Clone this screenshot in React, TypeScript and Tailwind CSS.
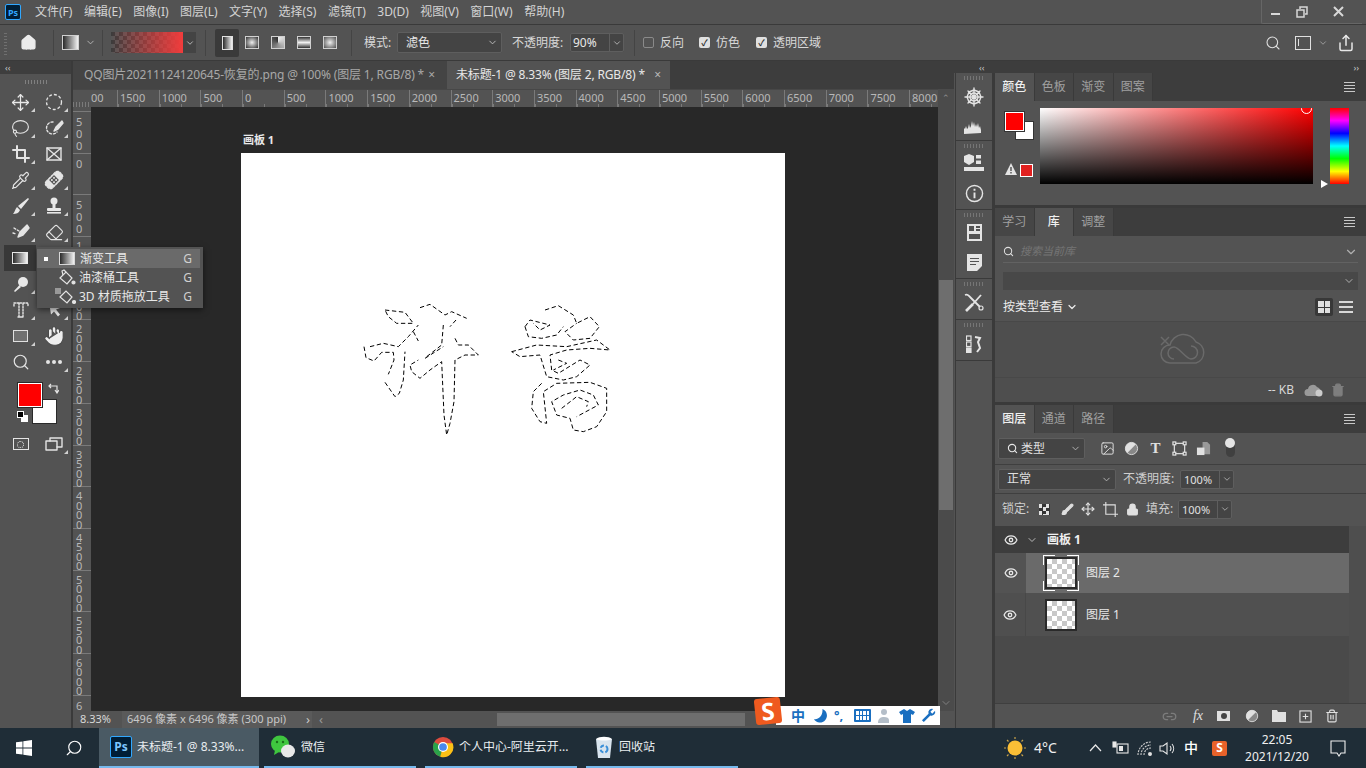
import { ChevronDown, Lasso, Pipette, Brush, Eraser, Search, Hand, Move, Home, Share, Image as ImageIcon, Eye, Trash2, Link2, Lock } from "lucide-react";
import type { ReactNode } from "react";

const MENUS = ["文件(F)", "编辑(E)", "图像(I)", "图层(L)", "文字(Y)", "选择(S)", "滤镜(T)", "3D(D)", "视图(V)", "窗口(W)", "帮助(H)"];
const H_RULER = ["1500", "1000", "500", "0", "500", "1000", "1500", "2000", "2500", "3000", "3500", "4000", "4500", "5000", "5500", "6000", "6500", "7000", "7500", "8000"];
const V_RULER = ["500", "0", "500", "1000", "1500", "2000", "2500", "3000", "3500", "4000", "4500", "5000", "5500", "6000", "6"];

const CHECKER = "bg-[conic-gradient(#c8c8c8_25%,#ffffff_0_50%,#c8c8c8_0_75%,#ffffff_0)] bg-[length:10px_10px]";
const GRAD_ICON = "bg-[linear-gradient(90deg,#2a2a2a,#f2f2f2)]";

function Svg({ children, size = 20, fill = "none" }: { children: ReactNode; size?: number; fill?: string }) {
  return (
    <svg width={size} height={size} viewBox="0 0 20 20" fill={fill} stroke={fill === "none" ? "#e4e4e4" : "none"} strokeWidth="1.4" strokeLinecap="round" strokeLinejoin="round">
      {children}
    </svg>
  );
}

function Tool({ children, more = true }: { children: ReactNode; more?: boolean }) {
  return (
    <div className="relative flex h-[26px] items-center justify-center">
      {children}
      {more && <span className="absolute bottom-[3px] right-[3px] h-0 w-0 border-b-[4px] border-l-[4px] border-b-[#d0d0d0] border-l-transparent" />}
    </div>
  );
}

function LeftToolbar() {
  return (
    <div className="flex w-[73px] shrink-0 flex-col border-r-2 border-[#3a3a3a]">
      <div className="flex h-[13px] items-center bg-[#3e3e3e] pl-[5px] text-[9px] leading-none text-[#c8c8c8]">‹‹</div>
      <div className="flex h-[15px] items-center justify-center">
        <div className="h-[4px] w-[22px] bg-[repeating-linear-gradient(90deg,#808080_0_1px,transparent_1px_3px)]" />
      </div>
      <div className="grid grid-cols-2 pl-[4px]">
        <Tool><Move size={19} color="#e8e8e8" strokeWidth={1.6} /></Tool>
        <Tool><svg width="20" height="20" viewBox="0 0 20 20" fill="none" stroke="#e4e4e4" strokeWidth="1.3" strokeDasharray="3 2"><circle cx="10" cy="10" r="7.5" /></svg></Tool>
        <Tool><Lasso size={19} color="#e4e4e4" strokeWidth={1.4} /></Tool>
        <Tool><Svg><path strokeDasharray="2 2" d="M9 4a6 6 0 1 0 4 10" /><path fill="#e4e4e4" d="M18 3l-6 6-2 4 4-2 5-6z" /></Svg></Tool>
        <Tool><Svg><path strokeWidth="2" d="M6 2v12h12M2 6h12v12" /></Svg></Tool>
        <Tool more={false}><Svg><rect x="3" y="4" width="14" height="12" /><path d="M3 4l14 12M17 4L3 16" /></Svg></Tool>
        <Tool><Pipette size={19} color="#e4e4e4" strokeWidth={1.5} /></Tool>
        <Tool><Svg><g transform="rotate(-45 10 10)"><rect x="0.5" y="5.5" width="19" height="9" rx="3" fill="#e4e4e4" strokeDasharray="2 1.5" /><rect x="6.5" y="6.5" width="7" height="7" fill="#555" stroke="none" /><circle cx="8.5" cy="8.5" r="1" fill="#e4e4e4" stroke="none" /><circle cx="11.5" cy="11.5" r="1" fill="#e4e4e4" stroke="none" /><circle cx="8.5" cy="11.5" r="1" fill="#e4e4e4" stroke="none" /><circle cx="11.5" cy="8.5" r="1" fill="#e4e4e4" stroke="none" /></g></Svg></Tool>
        <Tool><Svg fill="#e8e8e8"><path d="M17 2l1 1-8 10-3-3zM6 11l3 3c-1 3-4 4-7 4 2-2 2-5 4-7z" /></Svg></Tool>
        <Tool><Svg fill="#e8e8e8"><circle cx="10" cy="5" r="3.5" /><rect x="8.5" y="7" width="3" height="6" /><rect x="3" y="12" width="14" height="3" rx="1" /><rect x="3" y="16" width="14" height="1.6" /></Svg></Tool>
        <Tool><Svg><path fill="#e4e4e4" d="M16 3l-7 7-2 5 5-2 6-7z" /><path strokeDasharray="2 2" d="M3 6l5 3M2 11l3 1" /></Svg></Tool>
        <Tool><Eraser size={19} color="#e4e4e4" strokeWidth={1.4} /></Tool>
        <div className="relative flex h-[26px] w-[32px] items-center justify-center bg-[#383838]">
          <div className={`h-[12px] w-[16px] border border-[#e8e8e8] ${GRAD_ICON}`} />
        </div>
        <div />
        <Tool><Svg fill="#e8e8e8"><circle cx="12" cy="8" r="5" /><path d="M8.5 11L3 17l1 1 6-5z" /></Svg></Tool>
        <div />
        <Tool><Svg><path strokeDasharray="1.5 1.5" d="M3 6V3h14v3M8 3v14h4V3M7 17h6" /></Svg></Tool>
        <Tool><Svg fill="#e8e8e8"><path d="M5 2l11 6-4 1.5 4 5-2 2-4-5-3 3z" /></Svg></Tool>
        <Tool><div className="h-[12px] w-[15px] border border-[#e0e0e0] bg-[#707070]" /></Tool>
        <Tool more={false}><Hand size={22} color="#4a4a4a" fill="#eeeeee" strokeWidth={1.1} /></Tool>
        <Tool more={false}><Search size={18} color="#e4e4e4" strokeWidth={1.6} /></Tool>
        <Tool><div className="flex gap-[2px]"><span className="h-[4px] w-[4px] rounded-full bg-[#e4e4e4]" /><span className="h-[4px] w-[4px] rounded-full bg-[#e4e4e4]" /><span className="h-[4px] w-[4px] rounded-full bg-[#e4e4e4]" /></div></Tool>
      </div>
      <div className="relative mt-[8px] h-[48px]">
        <div className="absolute left-[32px] top-[16px] h-[25px] w-[25px] border border-[#2a2a2a] bg-white" />
        <div className="absolute left-[18px] top-0 h-[24px] w-[24px] border border-white bg-[#ff0000] outline outline-1 outline-[#2a2a2a]" />
        <svg className="absolute left-[48px] top-[0px]" width="11" height="11" viewBox="0 0 11 11" fill="none" stroke="#e4e4e4" strokeWidth="1.2"><path d="M3 1L1 3l2 2M1 3h8v6M7 7l2 3 2-3" /></svg>
        <div className="absolute left-[21px] top-[32px] h-[7px] w-[7px] bg-white" />
        <div className="absolute left-[17px] top-[28px] h-[7px] w-[7px] border border-white bg-black" />
      </div>
      <div className="grid grid-cols-2 pl-[4px]">
        <Tool more={false}><div className="flex h-[12px] w-[16px] items-center justify-center border border-[#e4e4e4]"><span className="h-[7px] w-[7px] rounded-full border border-dotted border-[#e4e4e4]" /></div></Tool>
        <Tool><Svg><rect x="2" y="7" width="11" height="9" /><path d="M6 7V4h12v9h-5" /></Svg></Tool>
      </div>
    </div>
  );
}

function FlyoutMenu() {
  return (
    <div className="absolute left-[37px] top-[186px] z-20 w-[166px] bg-[#535353] py-[2px] text-[12px] text-[#e8e8e8] shadow-[0_2px_6px_rgba(0,0,0,0.5)]">
      <div className="mr-[3px] flex h-[19px] items-center bg-[#6a6a6a] pr-[8px]">
        <span className="ml-[7px] h-[4px] w-[4px] bg-white" />
        <div className={`ml-[11px] h-[13px] w-[16px] border border-[#d8d8d8] ${GRAD_ICON}`} />
        <span className="ml-[5px] flex-1 leading-none">渐变工具</span>
        <span className="text-[#d0d0d0]">G</span>
      </div>
      <div className="mr-[3px] flex h-[19px] items-center pr-[8px]">
        <svg className="ml-[21px]" width="18" height="17" viewBox="0 0 18 17" fill="none" stroke="#e4e4e4" strokeWidth="1.2"><path d="M2 9l6-6 6 6-5 6z" /><path d="M5 6L4 2l2-1 2 2" /><circle cx="15.5" cy="13.5" r="1.5" fill="#e4e4e4" /></svg>
        <span className="ml-[3px] flex-1 leading-none">油漆桶工具</span>
        <span className="text-[#d0d0d0]">G</span>
      </div>
      <div className="mr-[3px] flex h-[19px] items-center pr-[8px]">
        <svg className="ml-[18px]" width="21" height="17" viewBox="0 0 21 17" fill="none" stroke="#e4e4e4" strokeWidth="1.2"><rect x="0" y="0" width="6" height="6" fill="#999" stroke="none" /><path d="M5 9l6-6 6 6-5 6z" /><circle cx="19" cy="14" r="1.5" fill="#e4e4e4" /></svg>
        <span className="ml-[3px] flex-1 leading-none">3D 材质拖放工具</span>
        <span className="text-[#d0d0d0]">G</span>
      </div>
    </div>
  );
}

function Selection() {
  return (
    <svg className="absolute left-[109px] top-[142px]" width="270" height="145" viewBox="0 0 810 435" fill="none" stroke="#000" strokeWidth="3" strokeDasharray="13 8">
      <path d="M105 45L165 52L190 85L140 85L115 65Z" />
      <path d="M42 155L48 188L72 198L95 172L130 172L132 195L115 238" />
      <path d="M60 155L100 145L145 155L175 125L205 90" />
      <path d="M105 262L135 305L148 295L160 255L165 170" />
      <path d="M190 110L205 138" />
      <path d="M210 38L240 28L285 60L305 50L350 70" />
      <path d="M280 90L275 150M318 75L300 95" />
      <path d="M230 185L275 150M225 190L280 155" />
      <path d="M315 130L325 150L355 150L385 180L345 180L315 195L312 320L300 385L290 420L282 360L275 200L240 225L210 250L185 230L180 210L205 195" />
      <path d="M585 45L625 32L670 60L680 85L720 65L748 95L720 130L670 135L645 110L680 85" />
      <path d="M525 95L540 75L600 90L570 105L550 85M525 95L535 125L575 130L620 120L640 95" />
      <path d="M485 170L560 150L650 155L740 135L780 165L720 160L650 165L600 180L605 225L625 235L690 195L720 210L680 245L640 255L590 245L570 180L510 185Z" />
      <path d="M625 195L650 205L610 225" />
      <path d="M575 265L550 290L545 340L570 380L590 385L580 290L620 265L720 262L770 280L770 350L740 395L700 410L670 405L660 370L620 360L605 320L640 300L690 285L730 300L745 330L680 365" />
      <path d="M635 340L680 305L715 320L710 335" />
    </svg>
  );
}

function SogouBar() {
  return (
    <div className="absolute bottom-[3px] right-[14px] z-20 flex h-[19px] w-[164px] items-center justify-end gap-[6px] bg-white pr-[4px] text-[#1a6fc0]">
      <div className="absolute -left-[21px] -top-[8px] flex h-[26px] w-[26px] -rotate-6 items-center justify-center rounded-[3px] bg-[#ef5a1f] text-[24px] font-bold leading-none text-white">S</div>
      <span className="text-[14px] font-bold leading-none">中</span>
      <svg className="ml-[2px]" width="15" height="15" viewBox="0 0 16 16" fill="#1a6fc0"><path d="M10 1a7.5 7.5 0 1 1-9 11c5 1 10-4 9-11z" /></svg>
      <span className="w-[13px] text-[13px] font-bold leading-none">°,</span>
      <div className="ml-[1px] grid h-[13px] w-[17px] grid-cols-4 gap-[1px] rounded-[1px] bg-[#1a6fc0] p-[2px]">
        <span className="bg-white" /><span className="bg-white" /><span className="bg-white" /><span className="bg-white" />
        <span className="bg-white" /><span className="bg-white" /><span className="bg-white" /><span className="bg-white" />
      </div>
      <svg width="16" height="16" viewBox="0 0 16 16" fill="#b4bec8"><circle cx="7" cy="4" r="3" /><path d="M1 15c0-5 3-6 6-6s5 1 5 3v3z" /></svg>
      <svg width="16" height="16" viewBox="0 0 16 16" fill="#1a6fc0"><path d="M5 1L0 4l2 3 2-1v9h8V6l2 1 2-3-5-3-3 2z" /></svg>
      <svg width="15" height="15" viewBox="0 0 16 16" fill="#1a6fc0"><path d="M15 3l-3 3-2-2 3-3a4 4 0 0 0-5 5L1 13l2 2 7-7a4 4 0 0 0 5-5z" /></svg>
    </div>
  );
}

function DocArea() {
  return (
    <div className="relative flex w-[881px] shrink-0 flex-col">
      <div className="flex h-[28px] bg-[#3d3d3d] text-[12px] tracking-[-0.15px]">
        <div className="flex w-[374px] items-center justify-between whitespace-nowrap bg-[#444444] pl-[11px] pr-[12px] text-[#a8a8a8]">
          <span>QQ图片20211124120645-恢复的.png @ 100% (图层 1, RGB/8) *</span>
          <span>×</span>
        </div>
        <div className="flex w-[223px] items-center justify-between whitespace-nowrap bg-[#535353] pl-[9px] pr-[9px] text-[#e8e8e8]">
          <span>未标题-1 @ 8.33% (图层 2, RGB/8) *</span>
          <span className="text-[#b8b8b8]">×</span>
        </div>
      </div>
      <div className="flex min-h-0 flex-1">
        <div className="flex min-w-0 flex-1 flex-col">
          <div className="flex h-[18px] overflow-hidden border-t border-[#474747] text-[11px] leading-[16px] text-[#b8b8b8]">
            <div className="h-full w-[18px] shrink-0 bg-[repeating-linear-gradient(90deg,#7a7a7a_0_1px,transparent_1px_3px)] bg-[length:100%_5px] bg-bottom bg-no-repeat" />
            <div className="w-[26px] shrink-0 overflow-hidden text-left">00</div>
            {H_RULER.map((n, i) => (
              <div key={i} className="w-[41.7px] shrink-0 border-l border-[#7a7a7a] bg-[repeating-linear-gradient(90deg,#7a7a7a_0_1px,transparent_1px_20.85px)] bg-[length:100%_3px] bg-bottom bg-no-repeat pl-[2px]">{n}</div>
            ))}
          </div>
          <div className="flex min-h-0 flex-1">
            <div className="w-[18px] shrink-0 overflow-hidden pt-[4px] text-[11px] text-[#b8b8b8]">
              {V_RULER.map((n, i) => (
                <div key={i} className={`h-[41.7px] border-t border-[#7a7a7a] pl-[3px] pt-[4px] ${n.length > 3 ? "leading-[9.5px]" : "leading-[12px]"}`}>
                  <div className="w-[8px] break-all">{n}</div>
                </div>
              ))}
            </div>
            <div className="flex min-w-0 flex-1 flex-col bg-[#282828] pl-[150px] pt-[26px]">
              <div className="mb-[7px] h-[13px] pl-[2px] text-[11px] font-bold leading-[13px] text-[#e8e8e8]">画板 1</div>
              <div className="relative h-[544px] w-[544px] bg-white">
                <Selection />
              </div>
            </div>
          </div>
        </div>
        <div className="flex w-[16px] shrink-0 flex-col bg-[#4b4b4b]">
          <div className="flex h-[18px] items-center justify-center text-[9px] text-[#909090]">⌃</div>
          <div className="mx-[1px] mt-[173px] h-[230px] bg-[#6e6e6e]" />
          <div className="flex-1" />
          <div className="flex h-[16px] items-center justify-center"><ChevronDown size={12} color="#808080" /></div>
        </div>
      </div>
      <div className="relative flex h-[17px] shrink-0 items-center text-[11px] text-[#c8c8c8]">
        <span className="ml-[7px] w-[42px] text-[#d8d8d8]">8.33%</span>
        <div className="flex h-full w-[190px] items-center bg-[#5a5a5a] pl-[5px] pr-[2px]">
          <span className="flex-1">6496 像素 x 6496 像素 (300 ppi)</span>
          <span className="text-[13px] leading-none">›</span>
        </div>
        <span className="ml-[7px] w-[8px] text-[13px] leading-none text-[#999]">‹</span>
        <div className="ml-[170px] h-[13px] w-[248px] bg-[#6e6e6e]" />
        <SogouBar />
      </div>
    </div>
  );
}

function DockGroup({ h, children }: { h: string; children: ReactNode }) {
  return (
    <div className={`flex flex-col items-center border-b border-[#3a3a3a] ${h}`}>
      <div className="mt-[3px] h-[4px] w-[20px] bg-[repeating-linear-gradient(90deg,#757575_0_1px,transparent_1px_3px)]" />
      <div className="flex flex-1 flex-col items-center justify-around">{children}</div>
    </div>
  );
}

function IconDock() {
  return (
    <div className="ml-[1px] flex w-[38px] shrink-0 flex-col border-x border-[#3a3a3a]">
      <DockGroup h="h-[68px]">
        <Svg><circle cx="10" cy="10" r="4" /><path d="M10 1v18M1 10h18M4 4l12 12M16 4L4 16M10 3l5 2 2 5-2 5-5 2-5-2-2-5 2-5z" /></Svg>
        <svg width="20" height="14" viewBox="0 0 20 14" fill="#e4e4e4"><path d="M0 14V8l1 1 1-3 1 3 1-1 1-4 1 4 1-2 1-5 1 5 1-4 1 5 1-3 1 3 1-4 1 5 1-2 1 4v3z" /></svg>
      </DockGroup>
      <DockGroup h="h-[69px]">
        <svg width="20" height="19" viewBox="0 0 20 19" fill="#e4e4e4"><path d="M5 0l5 2v6l-5 3-5-3V2z" /><rect x="12" y="1" width="5" height="3.5" /><rect x="12" y="6.5" width="5" height="3.5" /><rect x="0" y="13" width="20" height="4" /></svg>
        <svg width="19" height="19" viewBox="0 0 20 20" fill="none" stroke="#e4e4e4" strokeWidth="1.5"><circle cx="10" cy="10" r="8.5" /><path strokeWidth="2" d="M10 9v6M10 5v2" /></svg>
      </DockGroup>
      <DockGroup h="h-[69px]">
        <svg width="15" height="17" viewBox="0 0 15 17" fill="#e4e4e4"><path d="M0 0h15v17H0zM2 2v5h5V2zM9 2v2h4V2zM9 5v2h4V5zM2 10v5h11v-5z" fillRule="evenodd" /></svg>
        <svg width="15" height="17" viewBox="0 0 15 17" fill="#e4e4e4"><path d="M0 0h15v12l-5 5H0zM3 4v1h9V4zM3 7v1h9V7zM3 10v1h6v-1z" fillRule="evenodd" /></svg>
      </DockGroup>
      <DockGroup h="h-[41px]">
        <svg width="20" height="19" viewBox="0 0 20 19" fill="none" stroke="#e4e4e4" strokeWidth="1.8"><path strokeWidth="2.6" d="M2 18l7-7" /><path d="M9 11l8-9" /><path d="M1 2a3.5 3.5 0 0 1 4 1l2 2 9 9" /><circle cx="17" cy="15" r="2" strokeWidth="1.2" /></svg>
      </DockGroup>
      <DockGroup h="h-[41px]">
        <svg width="16" height="18" viewBox="0 0 16 18" fill="none" stroke="#e4e4e4" strokeWidth="1.2"><rect x="0.5" y="1" width="4.5" height="4.5" /><rect x="0.5" y="7" width="4.5" height="4.5" /><rect x="0.5" y="13" width="4.5" height="4.5" fill="#e4e4e4" /><path strokeWidth="2" d="M9 2l5 1-2 4 2 6-3 4" /></svg>
      </DockGroup>
    </div>
  );
}

function PanelTabs({ tabs, active }: { tabs: string[]; active: number }) {
  return (
    <div className="flex h-[28px] shrink-0 bg-[#3d3d3d] text-[12px]">
      {tabs.map((t, i) => (
        <div key={t} className={`flex w-[39.5px] items-center justify-center border-r border-[#3a3a3a] ${i === active ? "bg-[#535353] font-medium text-[#f0f0f0]" : "bg-[#464646] text-[#a0a0a0]"}`}>{t}</div>
      ))}
      <div className="ml-auto flex w-[22px] flex-col justify-center gap-[2px] pr-[6px]">
        <span className="h-px w-[11px] bg-[#c8c8c8]" /><span className="h-px w-[11px] bg-[#c8c8c8]" /><span className="h-px w-[11px] bg-[#c8c8c8]" /><span className="h-px w-[11px] bg-[#c8c8c8]" />
      </div>
    </div>
  );
}

function ColorPanel() {
  return (
    <div className="h-[135px] shrink-0 border-b-[3px] border-[#3a3a3a]">
      <PanelTabs tabs={["颜色", "色板", "渐变", "图案"]} active={0} />
      <div className="flex pl-[10px] pt-[7px]">
        <div className="relative h-[76px] w-[35px] shrink-0">
          <div className="absolute left-[10px] top-[13px] h-[19px] w-[19px] border border-[#333] bg-white" />
          <div className="absolute left-0 top-[4px] h-[19px] w-[19px] border border-white bg-[#ff0000] outline outline-1 outline-[#333]" />
          <svg className="absolute left-0 top-[55px]" width="12" height="12" viewBox="0 0 12 12"><path d="M6 0l6 12H0z" fill="#e4e4e4" /><path d="M6 4v4M6 9v1.5" stroke="#444" strokeWidth="1.3" /></svg>
          <div className="absolute left-[15px] top-[56px] h-[13px] w-[13px] border border-white bg-[#e1201f]" />
        </div>
        <div className="relative h-[76px] w-[273px] shrink-0 overflow-hidden bg-[linear-gradient(to_bottom,transparent,#000),linear-gradient(to_right,#fff,#f00)]">
          <div className="absolute -top-[5px] right-[1px] h-[11px] w-[11px] rounded-full border border-white" />
        </div>
        <div className="relative ml-[17px] h-[76px] w-[19px] bg-[linear-gradient(to_bottom,#f00,#f0f,#00f,#0ff,#0f0,#ff0,#f00)]">
          <div className="absolute -left-[9px] bottom-[-4px] h-0 w-0 border-y-[4px] border-l-[7px] border-y-transparent border-l-white" />
        </div>
      </div>
    </div>
  );
}

function LibraryPanel() {
  return (
    <div className="flex h-[197px] shrink-0 flex-col border-b-[3px] border-[#3a3a3a]">
      <PanelTabs tabs={["学习", "库", "调整"]} active={1} />
      <div className="mx-[8px] mt-[5px] flex h-[22px] items-center border-b border-[#626262]">
        <Search size={11} color="#e0e0e0" strokeWidth={2.2} />
        <span className="ml-[6px] flex-1 text-[11px] italic text-[#757575]">搜索当前库</span>
        <ChevronDown size={14} color="#b0b0b0" />
      </div>
      <div className="mx-[8px] mt-[9px] flex h-[18px] items-center justify-end bg-[#484848] pr-[3px]">
        <ChevronDown size={12} color="#b0b0b0" />
      </div>
      <div className="flex h-[32px] items-center border-b border-[#484848] pl-[8px] pr-[13px] pt-[3px] text-[12px] text-[#ececec]">
        <span>按类型查看</span>
        <ChevronDown size={12} color="#ececec" className="ml-[3px]" strokeWidth={2.4} />
        <div className="ml-auto flex h-[18px] w-[18px] items-center justify-center rounded-[2px] bg-[#383838]">
          <div className="grid grid-cols-2 gap-[1px]"><span className="h-[5.5px] w-[5.5px] bg-[#e0e0e0]" /><span className="h-[5.5px] w-[5.5px] bg-[#e0e0e0]" /><span className="h-[5.5px] w-[5.5px] bg-[#e0e0e0]" /><span className="h-[5.5px] w-[5.5px] bg-[#e0e0e0]" /></div>
        </div>
        <div className="ml-[6px] flex w-[14px] flex-col gap-[3px]">
          <span className="h-[2px] bg-[#d8d8d8]" /><span className="h-[2px] bg-[#d8d8d8]" /><span className="h-[2px] bg-[#d8d8d8]" />
        </div>
      </div>
      <div className="flex h-[56px] items-center justify-center border-b border-[#484848] bg-[#4e4e4e] pl-[4px]">
        <svg width="46" height="34" viewBox="0 0 46 34" fill="none" stroke="#6a6a6a" strokeWidth="1.5"><path d="M1 4l8 8M9 4l-8 8" /><path d="M10 30a9 9 0 0 1 0-18 14 14 0 0 1 26-3 11 11 0 0 1 0 21z" /><path d="M14 26a6 6 0 0 1 0-12c5 0 12 12 17 12a6 6 0 0 0 0-13" /></svg>
      </div>
      <div className="flex flex-1 items-center justify-end bg-[#4e4e4e] pr-[21px] text-[12px] text-[#d8d8d8]">
        <span>-- KB</span>
        <svg className="ml-[10px]" width="20" height="14" viewBox="0 0 20 14" fill="#9a9a9a"><path d="M4 13a3.5 3.5 0 0 1 0-7 5 5 0 0 1 9-2 4 4 0 0 1 3 5v4z" /><circle cx="15" cy="10" r="3.5" fill="#ccc" /></svg>
        <Trash2 size={14} color="#7e7e7e" className="ml-[7px]" fill="#7e7e7e" />
      </div>
    </div>
  );
}

function SmallSelect({ w, label, icon }: { w: string; label: string; icon?: boolean }) {
  return (
    <div className={`flex h-[21px] items-center justify-between rounded-[2px] border border-[#5e5e5e] bg-[#444444] pl-[8px] pr-[3px] text-[12px] text-[#e0e0e0] ${w}`}>
      <span className="flex items-center gap-[3px]">
        {icon && <Search size={11} color="#e8e8e8" strokeWidth={2.4} />}
        {label}
      </span>
      <ChevronDown size={11} color="#b8b8b8" />
    </div>
  );
}

function PercentInput({ value }: { value: string }) {
  return (
    <div className="flex h-[19px] w-[54px] items-center rounded-[2px] border border-[#5e5e5e] bg-[#444444] text-[11px] text-[#e0e0e0]">
      <span className="w-[39px] border-r border-[#5e5e5e] pl-[3px] leading-[17px]">{value}</span>
      <ChevronDown size={10} color="#b8b8b8" className="ml-[2px]" />
    </div>
  );
}

function LayerRow({ name, active }: { name: string; active?: boolean }) {
  return (
    <div className={`flex shrink-0 ${active ? "h-[40px]" : "h-[43px]"}`}>
      <div className={`flex w-[31px] items-center justify-center ${active ? "bg-[#535353]" : "border-r border-[#484848] bg-[#4f4f4f]"}`}>
        <Eye size={14} color="#e8e8e8" strokeWidth={2.2} />
      </div>
      <div className={`flex w-[323px] items-center pl-[19px] ${active ? "bg-[#6a6a6a]" : "bg-[#505050]"}`}>
        <div className={`relative h-[32px] w-[32px] border-2 border-[#2a2a2a] ${CHECKER}`}>
          {active && (
            <>
              <span className="absolute -left-[4px] -top-[4px] h-[10px] w-[12px] border-l border-t border-white" />
              <span className="absolute -right-[4px] -top-[4px] h-[10px] w-[12px] border-r border-t border-white" />
              <span className="absolute -bottom-[4px] -left-[4px] h-[10px] w-[12px] border-b border-l border-white" />
              <span className="absolute -bottom-[4px] -right-[4px] h-[10px] w-[12px] border-b border-r border-white" />
            </>
          )}
        </div>
        <span className="ml-[9px] text-[12px] text-[#e8e8e8]">{name}</span>
      </div>
    </div>
  );
}

function LayersPanel() {
  return (
    <div className="flex min-h-0 flex-1 flex-col">
      <PanelTabs tabs={["图层", "通道", "路径"]} active={0} />
      <div className="flex h-[32px] items-center gap-[12px] border-b border-[#3f3f3f] pl-[3px]">
        <SmallSelect w="w-[87px]" label="类型" icon />
        <div className="ml-[3px] flex items-center gap-[9px]">
          <ImageIcon size={15} color="#dcdcdc" strokeWidth={1.6} />
          <svg width="15" height="15" viewBox="0 0 16 16"><circle cx="8" cy="8" r="6.5" fill="#888" stroke="#ddd" /><path d="M8 1.5A6.5 6.5 0 0 0 3.5 12.7L12.7 3.5A6.5 6.5 0 0 0 8 1.5z" fill="#e0e0e0" /></svg>
          <span className="w-[15px] text-center font-['Liberation_Serif',serif] text-[15px] font-bold leading-none text-[#e0e0e0]">T</span>
          <svg width="15" height="15" viewBox="0 0 16 16" fill="none" stroke="#e0e0e0" strokeWidth="1.3"><rect x="2.5" y="2.5" width="11" height="11" /><rect x="1" y="1" width="3" height="3" fill="#555" /><rect x="12" y="1" width="3" height="3" fill="#555" /><rect x="1" y="12" width="3" height="3" fill="#555" /><rect x="12" y="12" width="3" height="3" fill="#555" /></svg>
          <svg width="15" height="15" viewBox="0 0 16 16" fill="#e0e0e0"><path d="M7 1h5l3 3v10H7z" fillOpacity="0.5" /><rect x="1" y="7" width="8" height="8" /></svg>
        </div>
        <div className="relative ml-[3px] h-[17px] w-[9px] rounded-full bg-[#404040]">
          <span className="absolute -left-[1px] -top-[2px] h-[10px] w-[10px] rounded-full bg-[#e4e4e4]" />
        </div>
      </div>
      <div className="flex h-[29px] items-center border-b border-[#3f3f3f] pl-[3px] text-[12px] text-[#cfcfcf]">
        <SmallSelect w="w-[118px]" label="正常" />
        <span className="ml-[7px] w-[57px]">不透明度:</span>
        <PercentInput value="100%" />
      </div>
      <div className="flex h-[32px] items-center pb-[2px] pl-[7px] text-[12px] text-[#cfcfcf]">
        <span className="w-[37px]">锁定:</span>
        <div className="h-[11px] w-[11px] bg-[conic-gradient(#333_25%,#e0e0e0_0_50%,#333_0_75%,#e0e0e0_0)] bg-[length:7px_7px]" />
        <Brush size={13} color="#e0e0e0" fill="#e0e0e0" className="ml-[11px]" />
        <Move size={14} color="#e0e0e0" className="ml-[7px]" />
        <svg className="ml-[8px]" width="15" height="15" viewBox="0 0 16 16" fill="none" stroke="#e0e0e0" strokeWidth="1.2"><path d="M3 0v13h13M0 3h13v13" /></svg>
        <Lock size={13} color="#e0e0e0" fill="#e0e0e0" className="ml-[8px]" />
        <span className="ml-[7px] w-[32px]">填充:</span>
        <PercentInput value="100%" />
      </div>
      <div className="flex min-h-0 flex-1">
        <div className="flex w-[354px] flex-col bg-[#4a4a4a]">
          <div className="flex h-[27px] shrink-0 items-center bg-[#3d3d3d]">
            <div className="flex w-[31px] justify-center"><Eye size={14} color="#e8e8e8" strokeWidth={2.2} /></div>
            <ChevronDown size={12} color="#b8b8b8" />
            <span className="ml-[9px] text-[12px] font-bold text-[#f0f0f0]">画板 1</span>
          </div>
          <LayerRow name="图层 2" active />
          <LayerRow name="图层 1" />
        </div>
        <div className="flex-1 bg-[#4e4e4e]" />
      </div>
      <div className="flex h-[25px] shrink-0 items-center justify-end gap-[13px] border-t border-[#3f3f3f] pr-[27px]">
        <Link2 size={15} color="#7c7c7c" className="mr-[3px]" />
        <span className="mr-[1px] font-['Liberation_Serif',serif] text-[14px] italic leading-none text-[#e0e0e0]">fx</span>
        <div className="mr-[2px] flex h-[10px] w-[13px] items-center justify-center bg-[#e0e0e0]"><span className="h-[6px] w-[6px] rounded-full bg-[#444]" /></div>
        <svg width="14" height="14" viewBox="0 0 16 16"><circle cx="8" cy="8" r="6.5" fill="#888" stroke="#ddd" /><path d="M8 1.5A6.5 6.5 0 0 0 3.5 12.7L12.7 3.5A6.5 6.5 0 0 0 8 1.5z" fill="#e0e0e0" /></svg>
        <svg width="14" height="12" viewBox="0 0 14 12" fill="#e0e0e0"><path d="M0 0h5l1 2h8v10H0z" /></svg>
        <svg width="13" height="13" viewBox="0 0 14 14" fill="none" stroke="#e0e0e0" strokeWidth="1.2"><rect x="1" y="1" width="12" height="12" /><path d="M7 4v6M4 7h6" /></svg>
        <Trash2 size={14} color="#e0e0e0" />
      </div>
    </div>
  );
}

function Dock() {
  return (
    <div className="flex min-w-0 flex-1 flex-col">
      <div className="flex h-[12px] shrink-0 items-center justify-between bg-[#3d3d3d] pl-[25px] pr-[7px] text-[9px] leading-none text-[#c8c8c8]">
        <span>‹‹</span>
        <span>››</span>
      </div>
      <div className="flex min-h-0 flex-1">
        <IconDock />
        <div className="flex min-w-0 flex-1 flex-col border-l-2 border-[#3a3a3a]">
          <ColorPanel />
          <LibraryPanel />
          <LayersPanel />
        </div>
      </div>
    </div>
  );
}

function Divider() {
  return <span className="mx-[9px] h-[26px] w-px bg-[#444444]" />;
}

function OptionCheck({ label, on, className }: { label: string; on?: boolean; className?: string }) {
  return (
    <div className={`flex items-center ${className ?? ""}`}>
      <span className={`flex h-[11px] w-[11px] items-center justify-center rounded-[2px] text-[9px] font-bold leading-none text-[#333] ${on ? "bg-[#e0e0e0]" : "border border-[#8a8a8a]"}`}>{on ? "✓" : ""}</span>
      <span className="ml-[6px]">{label}</span>
    </div>
  );
}

function OptionsBar() {
  return (
    <div className="flex h-[37px] shrink-0 items-center border-b border-t border-[#3a3a3a] text-[12px] text-[#d8d8d8]">
      <div className="ml-[4px] h-[24px] w-[3px] bg-[repeating-linear-gradient(0deg,#707070_0_1px,transparent_1px_3px)]" />
      <div className="flex w-[46px] justify-center pr-[4px]"><Home size={17} color="#ececec" fill="#ececec" /></div>
      <span className="h-[26px] w-px bg-[#444444]" />
      <div className={`ml-[8px] h-[15px] w-[17px] border border-[#d0d0d0] ${GRAD_ICON}`} />
      <ChevronDown size={11} color="#b8b8b8" className="ml-[6px]" />
      <span className="ml-[6px] h-[26px] w-px bg-[#444444]" />
      <div className="ml-[8px] flex h-[21px] w-[85px] bg-[#444444]">
        <div className="w-[72px] bg-[conic-gradient(#555_25%,#3c3c3c_0_50%,#555_0_75%,#3c3c3c_0)] bg-[length:8px_8px]">
          <div className="h-full w-full bg-[linear-gradient(90deg,transparent,#f23c3c)]" />
        </div>
        <div className="flex flex-1 items-center justify-center"><ChevronDown size={10} color="#c8c8c8" /></div>
      </div>
      <Divider />
      <div className="flex h-[28px] w-[24px] items-center justify-center rounded-[2px] bg-[#3a3a3a]"><div className={`h-[14px] w-[11px] border border-[#e0e0e0] ${GRAD_ICON}`} /></div>
      <div className="ml-[6px] flex items-center gap-[12px]">
        <div className="h-[13px] w-[14px] border border-[#d0d0d0] bg-[radial-gradient(#f0f0f0,#303030)]" />
        <div className="h-[13px] w-[14px] border border-[#d0d0d0] bg-[conic-gradient(#f0f0f0,#303030)]" />
        <div className="h-[13px] w-[14px] border border-[#d0d0d0] bg-[linear-gradient(#303030,#f0f0f0,#303030)]" />
        <div className="h-[13px] w-[14px] border border-[#d0d0d0] bg-[radial-gradient(#f0f0f0,#505050)]" />
      </div>
      <span className="ml-[14px] h-[26px] w-px bg-[#444444]" />
      <span className="ml-[12px] w-[33px]">模式:</span>
      <div className="flex h-[21px] w-[105px] items-center justify-between rounded-[2px] border border-[#5e5e5e] bg-[#444444] pl-[8px] pr-[3px] text-[#e8e8e8]">
        <span>滤色</span>
        <ChevronDown size={11} color="#c0c0c0" />
      </div>
      <span className="ml-[10px] w-[58px]">不透明度:</span>
      <div className="flex h-[19px] w-[54px] items-center rounded-[2px] border border-[#5e5e5e] bg-[#444444]">
        <span className="w-[39px] border-r border-[#5e5e5e] pl-[2px] text-[#e8e8e8]">90%</span>
        <ChevronDown size={10} color="#c0c0c0" className="ml-[2px]" />
      </div>
      <span className="ml-[10px] h-[26px] w-px bg-[#444444]" />
      <OptionCheck label="反向" className="ml-[8px]" />
      <OptionCheck label="仿色" on className="ml-[15px]" />
      <OptionCheck label="透明区域" on className="ml-[16px]" />
      <div className="ml-auto flex items-center pr-[11px]">
        <Search size={16} color="#e0e0e0" strokeWidth={1.6} />
        <div className="ml-[14px] h-[14px] w-[16px] border border-[#e0e0e0] pl-[2px]"><div className="mt-[2px] h-[7px] w-px bg-[#e0e0e0]" /></div>
        <ChevronDown size={10} color="#a8a8a8" className="ml-[7px]" />
        <Share size={18} color="#e8e8e8" className="ml-[9px]" strokeWidth={2} />
      </div>
    </div>
  );
}

function MenuBar() {
  return (
    <div className="flex h-[24px] shrink-0 items-center text-[12px] text-[#d4d4d4]">
      <div className="ml-[5px] flex h-[16px] w-[16px] items-center justify-center rounded-[2px] border border-[#31a8ff] bg-[#001e36] text-[9px] font-bold leading-none text-[#31a8ff]">Ps</div>
      <div className="ml-[14px] flex gap-[11.5px]">
        {MENUS.map((m) => <span key={m}>{m}</span>)}
      </div>
      <div className="ml-auto mr-[4px] flex h-[24px] w-[101px] items-center rounded-bl-[2px] border-b border-l border-[#666] text-[#d8d8d8]">
        <div className="flex w-[26px] justify-center"><span className="mt-[5px] h-[2px] w-[9px] bg-[#d8d8d8]" /></div>
        <div className="flex w-[27px] justify-center">
          <svg width="12" height="12" viewBox="0 0 12 12" fill="none" stroke="#d8d8d8" strokeWidth="1.5"><rect x="1" y="4" width="7" height="7" /><path d="M4 3V1h7v7H9" /></svg>
        </div>
        <div className="flex flex-1 justify-center">
          <svg width="11" height="11" viewBox="0 0 11 11" stroke="#d8d8d8" strokeWidth="2"><path d="M1 1l9 9M10 1l-9 9" /></svg>
        </div>
      </div>
    </div>
  );
}

function TaskItem({ w, active, icon, label, className }: { w: string; active?: boolean; icon: ReactNode; label: string; className?: string }) {
  return (
    <div className={`flex h-full items-center border-b-2 border-[#76b9ed] ${w} ${active ? "bg-[#4a5a64]" : ""} ${className ?? ""}`}>
      {icon}
      <span className="ml-[5px] truncate text-[12px] leading-none text-[#e8ecef]">{label}</span>
    </div>
  );
}

function Taskbar() {
  return (
    <div className="flex h-[40px] shrink-0 items-center bg-[#1f2d37] text-white">
      <div className="flex w-[48px] justify-center">
        <svg width="16" height="16" viewBox="0 0 16 16" fill="#ffffff"><path d="M0 2.3L6.5 1.4V7.6H0zM7.3 1.3L16 0V7.6H7.3zM0 8.4H6.5V14.6L0 13.7zM7.3 8.4H16V16L7.3 14.7z" /></svg>
      </div>
      <div className="flex w-[51px] justify-center">
        <Search size={18} color="#ffffff" strokeWidth={1.5} className="-scale-x-100" />
      </div>
      <TaskItem w="w-[160px]" active label="未标题-1 @ 8.33%..." className="pl-[11px]" icon={
        <div className="flex h-[22px] w-[22px] shrink-0 items-center justify-center rounded-[2px] border border-[#31a8ff] bg-[#001e36] text-[12px] font-bold leading-none text-[#7cc6ff]">Ps</div>
      } />
      <TaskItem w="w-[152px]" label="微信" className="ml-[5px] pl-[6px]" icon={
        <svg width="26" height="26" viewBox="0 0 26 26"><ellipse cx="10" cy="10" rx="9" ry="8.5" fill="#3fc63f" /><path d="M5 16l-1 5 5-3z" fill="#3fc63f" /><ellipse cx="18" cy="17" rx="7" ry="6.5" fill="#e8e8e8" /><circle cx="7" cy="8" r="1.2" fill="#1a6f1a" /><circle cx="13" cy="8" r="1.2" fill="#1a6f1a" /></svg>
      } />
      <TaskItem w="w-[152px]" label="个人中心-阿里云开..." className="ml-[9px] pl-[7px]" icon={
        <svg className="shrink-0" width="22" height="22" viewBox="0 0 24 24"><circle cx="12" cy="12" r="11" fill="#dd4b3e" /><path d="M12 12L2.5 6.5A11 11 0 0 0 9 22.6z" fill="#2aa34a" /><path d="M12 12l-3 10.6A11 11 0 0 0 22.5 8H12z" fill="#fbc116" /><circle cx="12" cy="12" r="5.5" fill="#fff" /><circle cx="12" cy="12" r="4.2" fill="#4a88ee" /></svg>
      } />
      <TaskItem w="w-[152px]" label="回收站" className="ml-[9px] pl-[8px]" icon={
        <svg className="shrink-0" width="20" height="24" viewBox="0 0 20 24"><path d="M2 4h16l-2 19H4z" fill="#d8e4ee" /><path d="M2 4c3-3 13-3 16 0-4 2-12 2-16 0z" fill="#ffffff" /><circle cx="10" cy="14" r="3.5" fill="none" stroke="#3a8fd8" strokeWidth="2" strokeDasharray="4 2" /></svg>
      } />
      <div className="ml-auto flex h-full items-center">
        <svg width="22" height="22" viewBox="0 0 22 22"><circle cx="11" cy="11" r="7.5" fill="#fbbf36" /><path d="M11 0v2M11 20v2M0 11h2M20 11h2M3 3l1.5 1.5M17.5 17.5L19 19M19 3l-1.5 1.5M4.5 17.5L3 19" stroke="#c9a24a" strokeWidth="1.2" /></svg>
        <span className="ml-[8px] w-[26px] text-[14px] leading-none text-[#f0f0f0]">4°C</span>
        <svg className="ml-[29px]" width="13" height="8" viewBox="0 0 13 8" fill="none" stroke="#e8e8e8" strokeWidth="1.2"><path d="M1 7l5.5-6L12 7" /></svg>
        <svg className="ml-[10px]" width="17" height="14" viewBox="0 0 17 14" fill="none" stroke="#e8e8e8" strokeWidth="1.1"><rect x="5" y="3" width="11" height="9" /><rect x="1" y="1" width="3" height="5" fill="#e8e8e8" /><rect x="7" y="5" width="4" height="5" fill="#e8e8e8" stroke="none" /></svg>
        <svg className="ml-[8px]" width="16" height="15" viewBox="0 0 16 15" fill="none" stroke="#d0d0d0" strokeWidth="1.1"><path d="M1 14a13 13 0 0 1 13-13M4 14a10 10 0 0 1 10-10M7 14a7 7 0 0 1 7-7" strokeDasharray="2 1" /><circle cx="13" cy="13" r="1.5" fill="#e8e8e8" /></svg>
        <svg className="ml-[6px]" width="16" height="15" viewBox="0 0 16 15" fill="none" stroke="#e8e8e8" strokeWidth="1.1"><path d="M1 5v5h3l4 3V2L4 5zM11 5a4 4 0 0 1 0 5M13 3a7 7 0 0 1 0 9" /></svg>
        <span className="ml-[9px] w-[16px] text-[14px] font-medium leading-none">中</span>
        <div className="ml-[12px] flex h-[15px] w-[15px] items-center justify-center rounded-[2px] bg-[#e8622a] text-[12px] font-bold leading-none">S</div>
        <div className="ml-[13px] flex w-[74px] flex-col items-center gap-[5px] text-[12px] leading-none text-[#f0f0f0]">
          <span>22:05</span>
          <span>2021/12/20</span>
        </div>
        <div className="flex w-[52px] justify-center pr-[4px]">
          <svg width="16" height="17" viewBox="0 0 16 17" fill="none" stroke="#f0f0f0" strokeWidth="1.1"><path d="M1 1h14v12h-4l-2 3-2-3H1z" /></svg>
        </div>
      </div>
    </div>
  );
}

export default function App() {
  return (
    <div className="flex h-[768px] w-[1366px] flex-col overflow-hidden bg-[#535353] font-['Noto_Sans','Noto_Sans_CJK_SC',sans-serif]">
      <MenuBar />
      <OptionsBar />
      <div className="relative flex min-h-0 flex-1">
        <LeftToolbar />
        <DocArea />
        <Dock />
        <FlyoutMenu />
      </div>
      <Taskbar />
    </div>
  );
}
